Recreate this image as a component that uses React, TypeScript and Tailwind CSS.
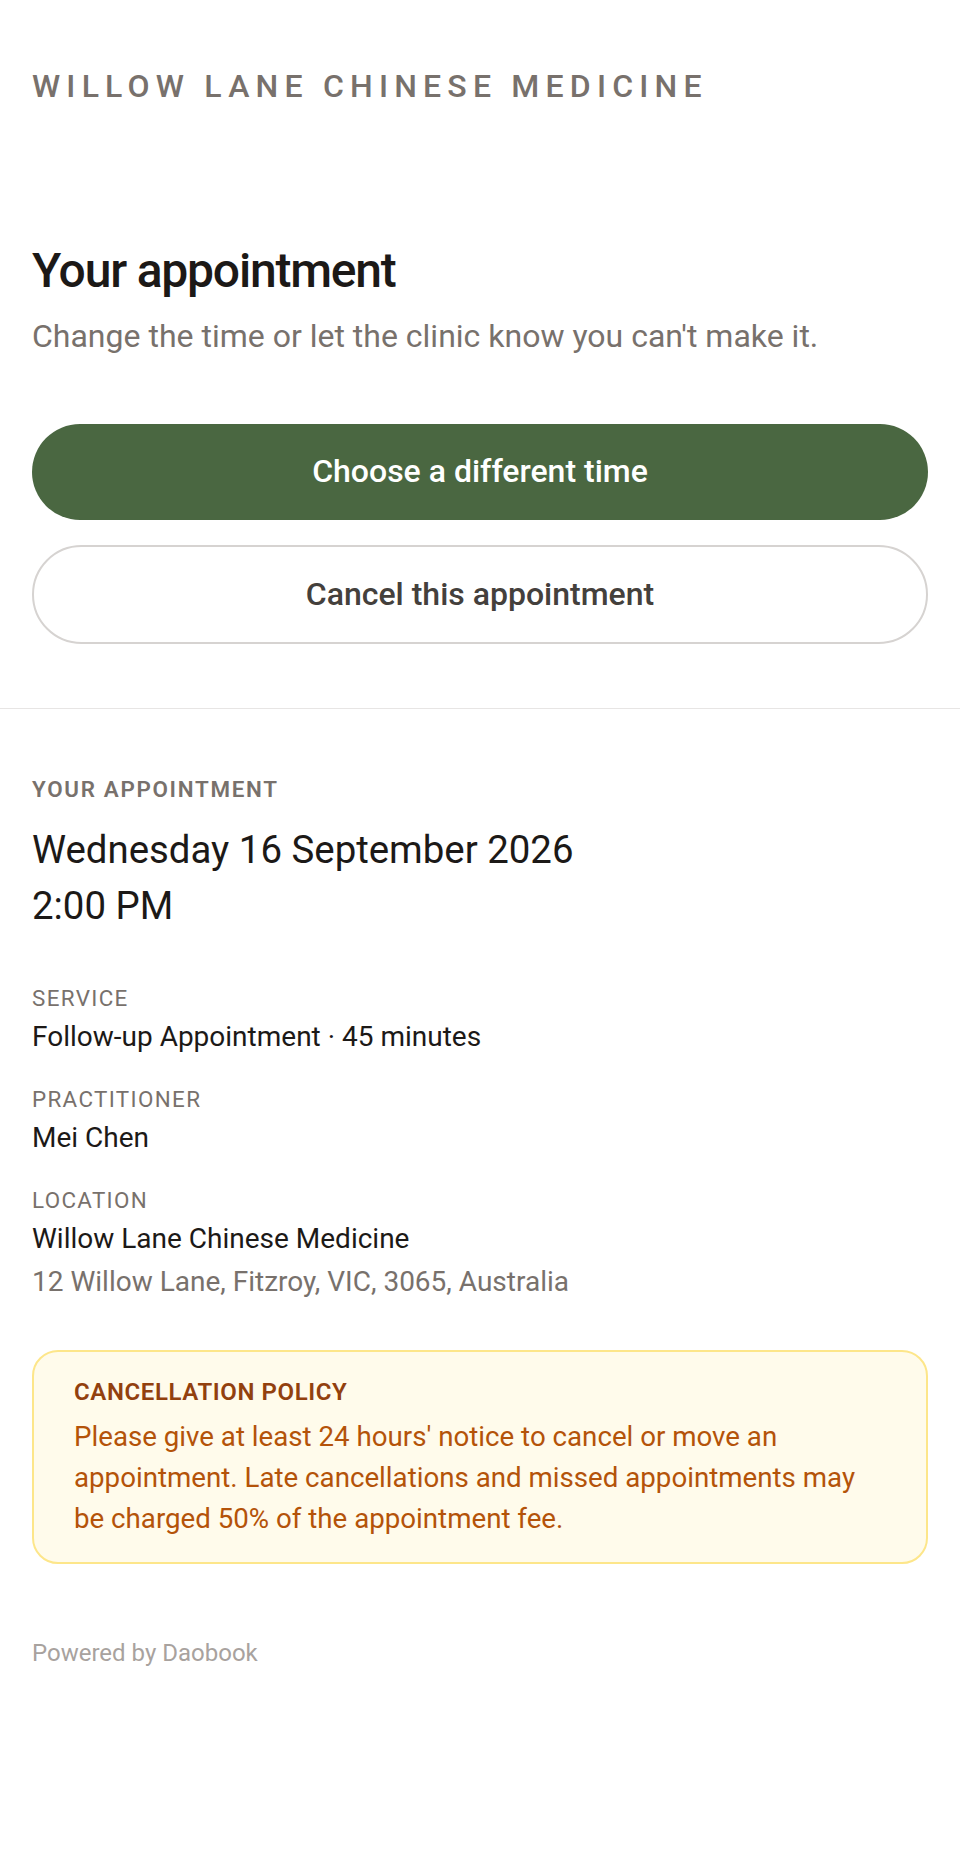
export default function App() {
  return (
    <div className="w-[960px] min-h-[1874px] bg-white font-['Roboto','Liberation_Sans',sans-serif] text-[#1c1917]">
      <section className="px-[32px] pt-[64px] pb-[64px]">
        <div className="text-[32px] leading-[45px] font-medium tracking-[6.2px] uppercase text-[#78716c]">
          Willow Lane Chinese Medicine
        </div>
        <h1 className="mt-[133px] text-[48px] leading-[57.6px] font-medium tracking-tight text-[#1c1917]">
          Your appointment
        </h1>
        <p className="mt-[12px] text-[32px] leading-[48px] text-[#78716c]">
          Change the time or let the clinic know you can't make it.
        </p>
        <div className="mt-[64px] flex flex-col gap-[25px]">
          <button className="h-[96px] w-full rounded-full bg-[#4a6741] text-white text-[32px] leading-[44.8px] font-medium flex items-center justify-center">
            Choose a different time
          </button>
          <button className="h-[99px] w-full rounded-full border-[2px] border-[#d6d3d1] bg-white text-[#44403c] text-[32px] leading-[44.8px] font-medium flex items-center justify-center">
            Cancel this appointment
          </button>
        </div>
      </section>
      <div className="h-[1.6px] bg-[#e7e5e4]" />
      <section className="px-[32px] pt-[64px] pb-[64px]">
        <div className="text-[22.4px] leading-[32px] font-semibold tracking-[0.075em] uppercase text-[#78716c]">
          Your appointment
        </div>
        <div className="mt-[17px] text-[38.4px] leading-[56px] text-[#1c1917]">
          <div>Wednesday 16 September 2026</div>
          <div>2:00 PM</div>
        </div>
        <dl className="mt-[48px] flex flex-col gap-[23px]">
          <div>
            <dt className="text-[22.4px] leading-[32px] tracking-[0.06em] uppercase text-[#78716c]">Service</dt>
            <dd className="mt-[1px] text-[28px] leading-[44.8px] text-[#1c1917]">
              Follow-up Appointment · 45 minutes
            </dd>
          </div>
          <div>
            <dt className="text-[22.4px] leading-[32px] tracking-[0.06em] uppercase text-[#78716c]">Practitioner</dt>
            <dd className="mt-[1px] text-[28px] leading-[44.8px] text-[#1c1917]">Mei Chen</dd>
          </div>
          <div>
            <dt className="text-[22.4px] leading-[32px] tracking-[0.06em] uppercase text-[#78716c]">Location</dt>
            <dd className="mt-[1px] text-[28px] leading-[44.8px] text-[#1c1917]">Willow Lane Chinese Medicine</dd>
            <dd className="-mt-[2px] text-[28px] leading-[44.8px] text-[#78716c]">
              12 Willow Lane, Fitzroy, VIC, 3065, Australia
            </dd>
          </div>
        </dl>
        <div className="mt-[46px] rounded-[26px] border-[2px] border-[#fde68a] bg-[#fffbeb] px-[40px] pt-[24px] pb-[23px]">
          <div className="text-[24px] leading-[32px] font-semibold tracking-wide uppercase text-[#92400e]">
            Cancellation policy
          </div>
          <p className="mt-[9px] text-[27.7px] leading-[40.6px] text-[#b45309]">
            Please give at least 24 hours' notice to cancel or move an appointment. Late cancellations and missed
            appointments may be charged 50% of the appointment fee.
          </p>
        </div>
        <div className="mt-[73px] text-[24px] leading-[32px] text-[#a8a29e]">Powered by Daobook</div>
      </section>
    </div>
  );
}
